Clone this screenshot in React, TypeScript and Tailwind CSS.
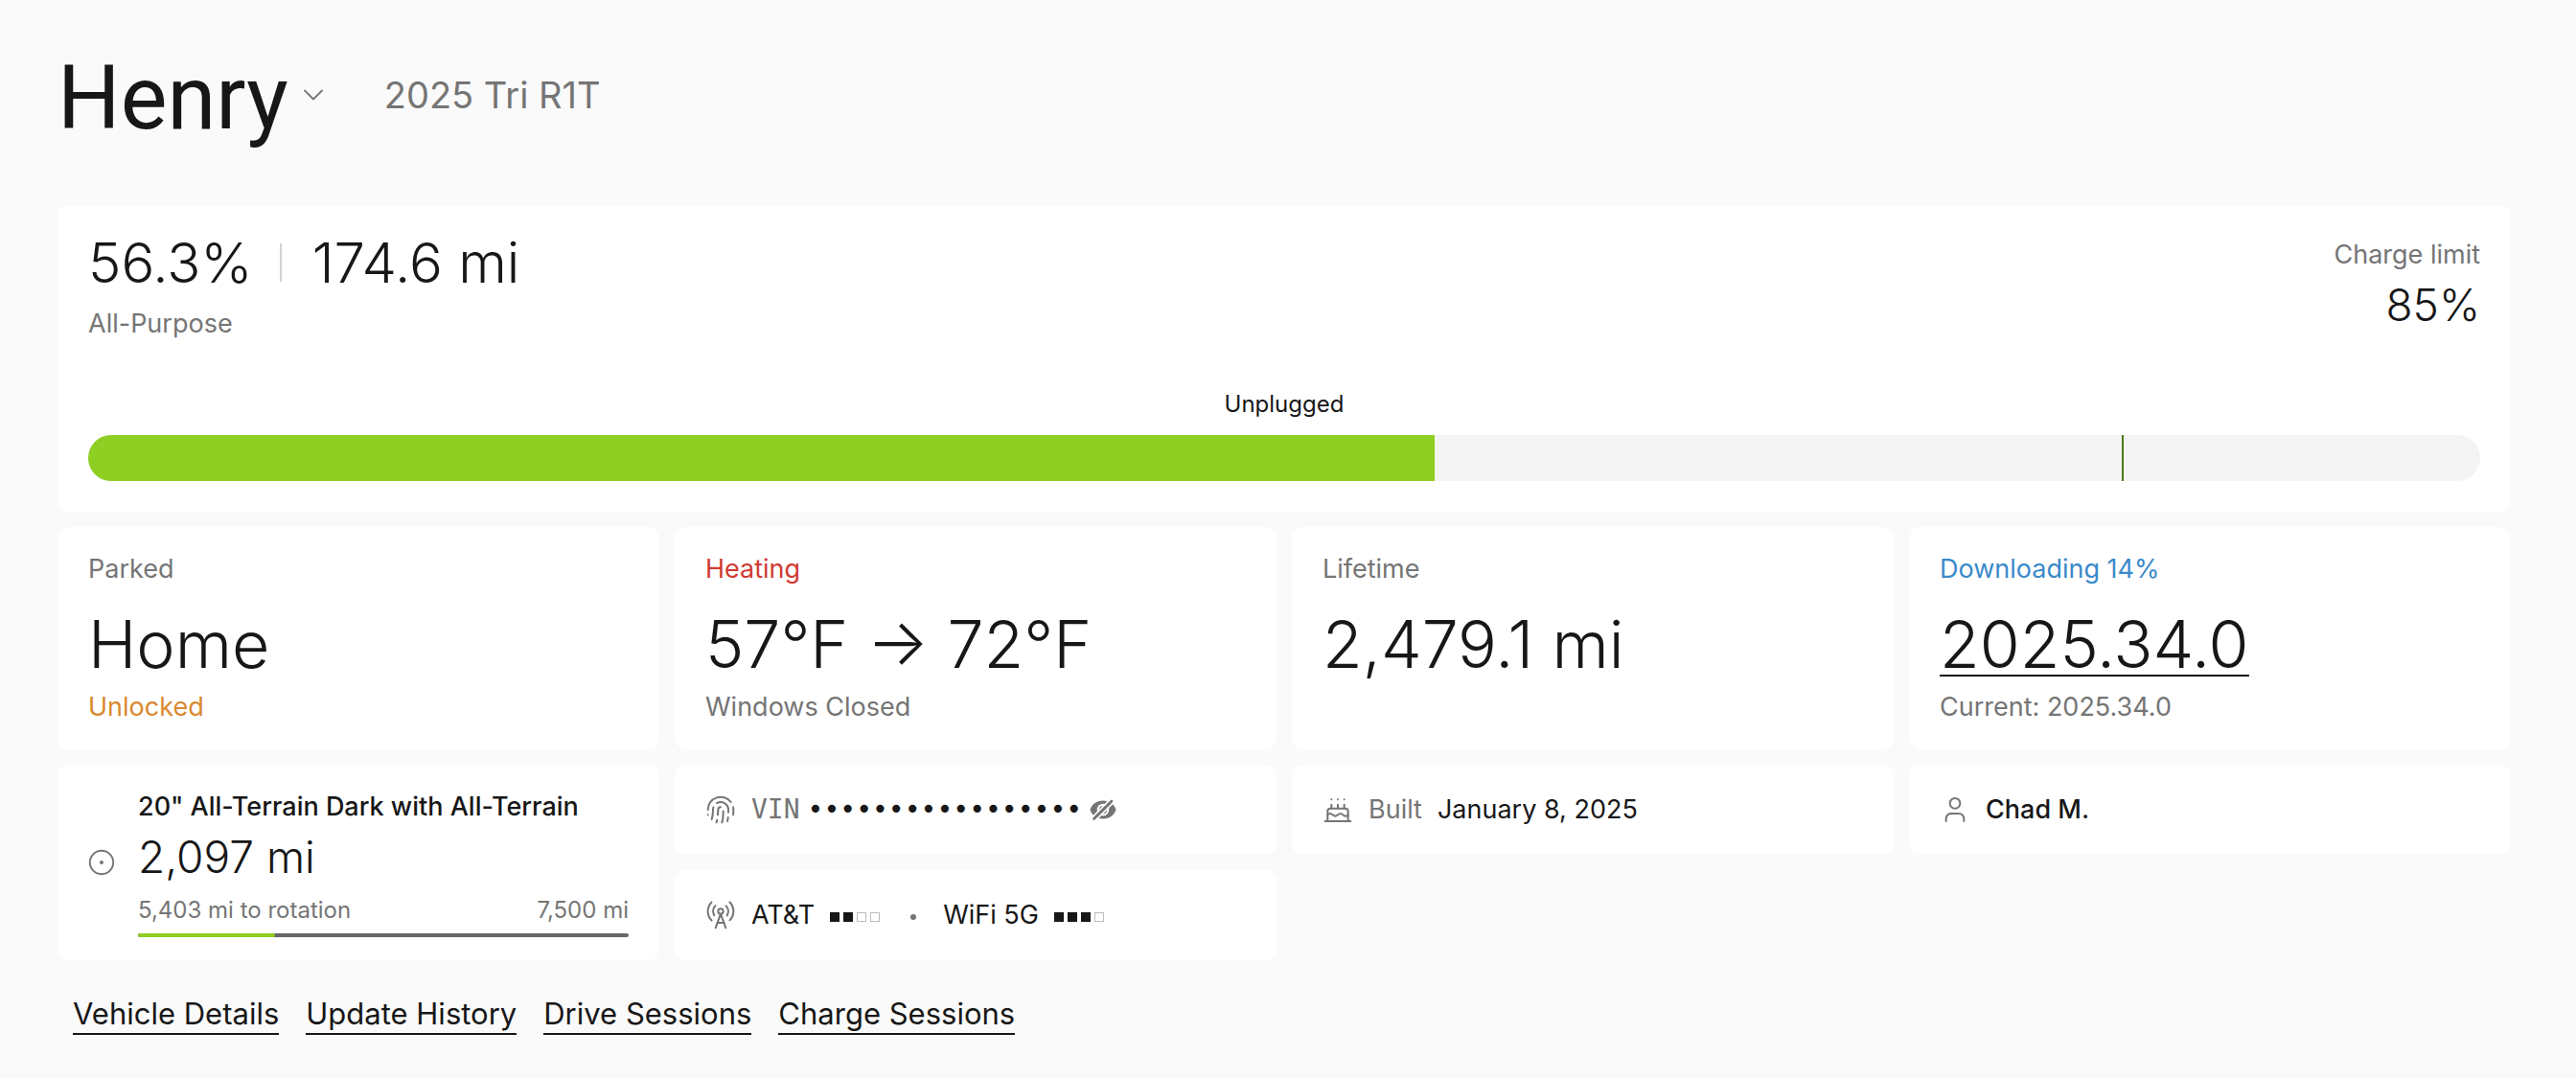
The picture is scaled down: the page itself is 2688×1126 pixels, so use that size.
import type { ReactNode } from "react";
import { Cake, ChevronDown, Fingerprint, RadioTower, User } from "lucide-react";

const battery = { level: 56.3, limit: 85 };
const tires = { driven: 2097, interval: 7500 };

const links = ["Vehicle Details", "Update History", "Drive Sessions", "Charge Sessions"];

function Card({ children, className = "" }: { children: ReactNode; className?: string }) {
  return <section className={`rounded-xl bg-white px-8 ${className}`}>{children}</section>;
}

function StatCard({
  label,
  labelClass = "text-[#757575]",
  note,
  noteClass = "text-[#757575]",
  children,
}: {
  label: string;
  labelClass?: string;
  note?: string;
  noteClass?: string;
  children: ReactNode;
}) {
  return (
    <Card className="flex flex-col py-6">
      <p className={`text-[27px] leading-10 ${labelClass}`}>{label}</p>
      <div className="mt-4 text-[68px] leading-21 font-light">{children}</div>
      {note && <p className={`mt-1 text-[27px] leading-10 ${noteClass}`}>{note}</p>}
    </Card>
  );
}

function Signal({ bars, label }: { bars: number; label: string }) {
  return (
    <span role="img" aria-label={label} className="flex gap-1 pt-1">
      {[0, 1, 2, 3].map((i) => (
        <span
          key={i}
          className={i < bars ? "size-[10px] bg-[#171717]" : "size-[10px] border border-[#bdbdbd]"}
        />
      ))}
    </span>
  );
}

function TireIcon() {
  return (
    <svg viewBox="0 0 28 28" className="size-7 shrink-0 text-[#757575]" aria-hidden="true">
      <circle cx="14" cy="14" r="12.2" fill="none" stroke="currentColor" strokeWidth="1.9" />
      <circle cx="14" cy="14" r="2" fill="currentColor" />
    </svg>
  );
}

function HiddenIcon() {
  return (
    <svg viewBox="0 0 28 24" className="h-6 w-7" fill="none" aria-hidden="true">
      <path
        d="M0.5 12C2.5 6 7.500 2.500 14 2.500S25.500 6 27.500 12C25.500 18 20.500 21.500 14 21.500S2.500 18 0.500 12z"
        fill="#757575"
      />
      <circle cx="14" cy="12" r="5.300" stroke="#fff" strokeWidth="2" />
      <path
        d="M1.400 21.400 22.400 0.400M5.100 24.100 25.600 3.600"
        stroke="#fff"
        strokeWidth="1.800"
      />
      <path d="M4.500 21.500 23 3" stroke="#757575" strokeWidth="2.600" strokeLinecap="round" />
    </svg>
  );
}

export default function App() {
  return (
    <div className="min-h-screen bg-[#fafafa] font-['Inter','Liberation_Sans',sans-serif] text-[#171717]">
      <main className="pt-10 pr-17 pb-11 pl-15">
        <header className="flex items-center pb-14">
          <h1 className="font-['Roboto','Liberation_Sans',sans-serif] text-[92px] leading-[110px]">
            <button type="button" className="flex items-center gap-2">
              <span className="pt-2">Henry</span>
              <ChevronDown className="size-9 text-[#757575]" strokeWidth={1.2} />
            </button>
          </h1>
          <p className="ml-14 text-[38px] leading-14 text-[#757575]">2025 Tri R1T</p>
        </header>

        <div className="flex flex-col gap-4">
          <Card className="py-8">
            <div className="flex items-start justify-between">
              <div>
                <div className="flex items-center text-[58px] leading-14 font-light">
                  <span>56.3%</span>
                  <span className="mr-8 ml-7 h-10 w-[2px] bg-[#d4d4d4]" />
                  <span>174.6 mi</span>
                </div>
                <p className="mt-4 text-[27px] leading-10 text-[#757575]">All-Purpose</p>
              </div>
              <div className="text-right">
                <p className="text-[27px] leading-10 text-[#757575]">Charge limit</p>
                <p className="mt-1 text-[46px] leading-14 font-light">85%</p>
              </div>
            </div>
            <p className="mt-12 text-center text-[24px] leading-8">Unplugged</p>
            <div
              role="progressbar"
              aria-label="Battery level"
              aria-valuenow={battery.level}
              className="relative mt-4 h-12 overflow-hidden rounded-full bg-[#f4f4f4]"
            >
              <div className="h-full bg-[#8fce22]" style={{ width: `${battery.level}%` }} />
              <div
                className="absolute inset-y-0 w-[2px] bg-[#4d7c0f]"
                style={{ left: `${battery.limit}%` }}
              />
            </div>
          </Card>

          <div className="grid grid-cols-4 gap-4">
            <StatCard label="Parked" note="Unlocked" noteClass="text-[#d9892e]">
              Home
            </StatCard>
            <StatCard label="Heating" labelClass="text-[#cf3a32]" note="Windows Closed">
              57°F → 72°F
            </StatCard>
            <StatCard label="Lifetime">2,479.1 mi</StatCard>
            <StatCard
              label="Downloading 14%"
              labelClass="text-[#3a8aca]"
              note="Current: 2025.34.0"
            >
              <a href="#release" className="inline-block border-b-2 border-[#171717] leading-16">
                2025.34.0
              </a>
            </StatCard>
          </div>

          <div className="grid grid-cols-4 grid-rows-2 gap-4">
            <Card className="row-span-2 flex items-center gap-6 py-6">
              <TireIcon />
              <div className="grow">
                <p className="text-[27px] leading-10 font-medium">
                  20" All-Terrain Dark with All-Terrain
                </p>
                <p className="text-[46px] leading-16 font-light">2,097 mi</p>
                <div className="flex justify-between pt-1 text-[24px] leading-10 text-[#757575]">
                  <span>5,403 mi to rotation</span>
                  <span>7,500 mi</span>
                </div>
                <div
                  role="progressbar"
                  aria-label="Tire rotation"
                  aria-valuenow={28}
                  className="mt-1 h-1 overflow-hidden rounded-full bg-[#666666]"
                >
                  <div
                    className="h-full rounded-full bg-[#8fce22]"
                    style={{ width: `${(tires.driven / tires.interval) * 100}%` }}
                  />
                </div>
              </div>
            </Card>

            <Card className="flex items-center text-[28px] leading-10">
              <Fingerprint className="size-8 text-[#757575]" strokeWidth={1.5} />
              <span className="ml-4 font-['DejaVu_Sans_Mono',monospace] text-[#757575]">VIN</span>
              <span className="ml-2 font-['DejaVu_Sans_Mono',monospace]">•••••••••••••••••</span>
              <button type="button" aria-label="Show VIN" className="ml-2">
                <HiddenIcon />
              </button>
            </Card>

            <Card className="flex items-center text-[27px] leading-10">
              <Cake className="size-8 text-[#757575]" strokeWidth={1.5} />
              <span className="ml-4 text-[#757575]">Built</span>
              <span className="ml-4">January 8, 2025</span>
            </Card>

            <Card className="flex items-center text-[27px] leading-10 font-medium">
              <User className="size-8 text-[#757575]" strokeWidth={1.5} />
              <span className="ml-4">Chad M.</span>
            </Card>

            <Card className="flex items-center text-[27px] leading-10">
              <RadioTower className="size-8 text-[#757575]" strokeWidth={1.5} />
              <span className="mr-4 ml-4">AT&amp;T</span>
              <Signal bars={2} label="2 of 4 bars" />
              <span className="mr-7 ml-8 mt-1 size-[6px] rounded-full bg-[#757575]" />
              <span className="mr-4">WiFi 5G</span>
              <Signal bars={3} label="3 of 4 bars" />
            </Card>
          </div>
        </div>

        <nav className="mt-9 ml-4 flex gap-7 text-[31px]">
          {links.map((link) => (
            <a key={link} href="#" className="border-b-2 border-[#171717] leading-10">
              {link}
            </a>
          ))}
        </nav>
      </main>
    </div>
  );
}
